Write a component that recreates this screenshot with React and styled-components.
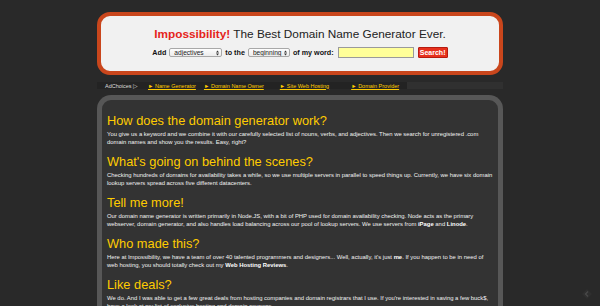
import React from "react"
import styled, { createGlobalStyle } from "styled-components"

const GlobalStyle = createGlobalStyle`
  html, body {
    margin: 0;
    padding: 0;
    background: #292929;
    font-family: "Liberation Sans", Arial, sans-serif;
  }
`

const Page = styled.div`
  width: 406px;
  margin: 12px auto 0;
  display: flex;
  flex-direction: column;
`

const Header = styled.div`
  box-sizing: border-box;
  height: 63px;
  border: 4px solid #c9461c;
  border-radius: 13px;
  background: #f1f1f1;
  padding-top: 11px;
  display: flex;
  flex-direction: column;
  align-items: center;
  gap: 6px;
`

const Title = styled.h1`
  margin: 0;
  font-size: 11.8px;
  line-height: 14px;
  font-weight: normal;
  color: #222;
  white-space: nowrap;
`

const Brand = styled.span`
  color: #e5241b;
  font-weight: bold;
`

const FormRow = styled.div`
  display: flex;
  align-items: center;
  gap: 3px;
  height: 11px;
  font-size: 7.2px;
  font-weight: bold;
  color: #111;
  white-space: nowrap;
`

const SelectWrap = styled.div`
  position: relative;
  width: ${({ w }) => w}px;
  height: 9px;
`

const Select = styled.select`
  appearance: none;
  box-sizing: border-box;
  width: 100%;
  height: 100%;
  margin: 0;
  padding: 0 0 0 4px;
  border: 1px solid #a8a8a8;
  border-radius: 2px;
  background: linear-gradient(#fdfdfd, #ececec);
  font-family: inherit;
  font-size: 6.6px;
  line-height: 7px;
  color: #222;
  outline: none;
`

const Arrows = styled.svg`
  position: absolute;
  right: 3px;
  top: 1.5px;
  width: 3px;
  height: 6px;
  pointer-events: none;
`

const WordInput = styled.input`
  box-sizing: border-box;
  width: 76px;
  height: 11px;
  margin: 0 0 0 1px;
  padding: 0 2px;
  border: 1px solid #9a9a9a;
  background: #ffff99;
  outline: none;
`

const SearchButton = styled.button`
  box-sizing: border-box;
  width: 30px;
  height: 11px;
  margin: 0 0 0 1px;
  padding: 0;
  border: 1px solid #b51c10;
  border-radius: 1px;
  background: #e7301c;
  color: #fff;
  font-family: inherit;
  font-size: 7px;
  font-weight: bold;
  line-height: 9px;
`

const AdBar = styled.div`
  margin-top: 7px;
  height: 7px;
  display: flex;
  background: #303030;
`

const AdLinks = styled.div`
  width: 310px;
  background: #232323;
  display: flex;
  align-items: center;
  padding-left: 8px;
  box-sizing: border-box;
  font-size: 5.5px;
  white-space: nowrap;
`

const AdChoices = styled.span`
  color: #ddd;
  width: 43px;
`

const AdLink = styled.a`
  color: #ffcc00;
  text-decoration: underline;
  margin-right: ${({ gap }) => gap}px;
`

const Content = styled.div`
  margin-top: 6px;
  border: 5px solid #575757;
  border-bottom: none;
  border-radius: 14px 14px 0 0;
  background: #333333;
  padding: 13px 5px 20px 5px;
  display: flex;
  flex-direction: column;
  gap: 7.4px;
`

const Section = styled.section`
  display: flex;
  flex-direction: column;
  gap: 2px;
`

const Heading = styled.h2`
  margin: 0;
  font-size: 12.8px;
  line-height: 15px;
  font-weight: normal;
  color: #ffcc00;
`

const Text = styled.p`
  margin: 0;
  font-size: 5.9px;
  line-height: 8.3px;
  color: #f2f2f2;
  b {
    color: #fff;
  }
`

const ScrollTop = styled.div`
  position: fixed;
  right: 7px;
  bottom: 8px;
  width: 12px;
  height: 12px;
`

function FakeSelect({ w, value }) {
  return (
    <SelectWrap w={w}>
      <Select defaultValue={value}>
        <option>{value}</option>
      </Select>
      <Arrows viewBox="0 0 3 6">
        <path d="M0 2.4 L1.5 0.4 L3 2.4 Z M0 3.6 L1.5 5.6 L3 3.6 Z" fill="#333" />
      </Arrows>
    </SelectWrap>
  )
}

const sections = [
  {
    title: "How does the domain generator work?",
    body: (
      <>You give us a keyword and we combine it with our carefully selected list of nouns, verbs, and adjectives. Then we search for unregistered .com domain names and show you the results. Easy, right?</>
    ),
  },
  {
    title: "What's going on behind the scenes?",
    body: (
      <>Checking hundreds of domains for availability takes a while, so we use multiple servers in parallel to speed things up. Currently, we have six domain lookup servers spread across five different datacenters.</>
    ),
  },
  {
    title: "Tell me more!",
    body: (
      <>Our domain name generator is written primarily in Node.JS, with a bit of PHP used for domain availability checking. Node acts as the primary webserver, domain generator, and also handles load balancing across our pool of lookup servers. We use servers from <b>iPage</b> and <b>Linode</b>.</>
    ),
  },
  {
    title: "Who made this?",
    body: (
      <>Here at Impossibility, we have a team of over 40 talented programmers and designers... Well, actually, it's just <b>me</b>. If you happen to be in need of web hosting, you should totally check out my <b>Web Hosting Reviews</b>.</>
    ),
  },
  {
    title: "Like deals?",
    body: (
      <>We do. And I was able to get a few great deals from hosting companies and domain registrars that I use. If you're interested in saving a few buck$, have a look at my list of exclusive hosting and domain coupons.</>
    ),
  },
]

export default function App() {
  return (
    <>
      <GlobalStyle />
      <Page>
        <Header>
          <Title>
            <Brand>Impossibility!</Brand> The Best Domain Name Generator Ever.
          </Title>
          <FormRow>
            <span>Add</span>
            <FakeSelect w={53} value="adjectives" />
            <span>to the</span>
            <FakeSelect w={42} value="beginning" />
            <span>of my word:</span>
            <WordInput />
            <SearchButton>Search!</SearchButton>
          </FormRow>
        </Header>
        <AdBar>
          <AdLinks>
            <AdChoices>AdChoices ▷</AdChoices>
            <AdLink gap={8}>► Name Generator</AdLink>
            <AdLink gap={16}>► Domain Name Owner</AdLink>
            <AdLink gap={22}>► Site Web Hosting</AdLink>
            <AdLink gap={0}>► Domain Provider</AdLink>
          </AdLinks>
        </AdBar>
        <Content>
          {sections.map((s) => (
            <Section key={s.title}>
              <Heading>{s.title}</Heading>
              <Text>{s.body}</Text>
            </Section>
          ))}
        </Content>
      </Page>
      <ScrollTop>
        <svg viewBox="0 0 12 12" width="12" height="12">
          <path d="M6 1 L11 6 L6 11 L1 6 Z" fill="#2f2f2f" />
          <path d="M7 3.5 L4.5 6 L7 8.5" fill="none" stroke="#4a4a4a" strokeWidth="1.2" />
        </svg>
      </ScrollTop>
    </>
  )
}
